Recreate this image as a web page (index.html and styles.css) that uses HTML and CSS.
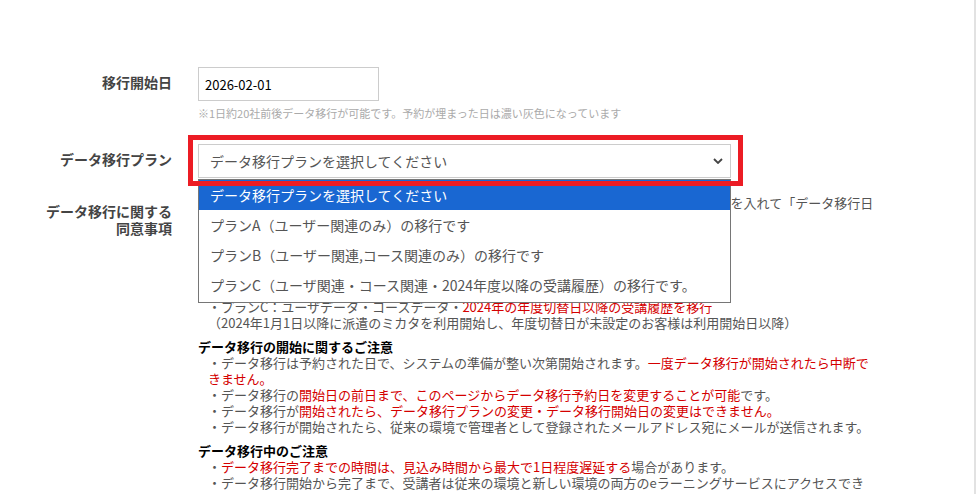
FILE: index.html
```html
<!DOCTYPE html>
<html lang="ja">
<head>
    <meta charset="UTF-8">
    <meta name="viewport" content="width=device-width, initial-scale=1.0">
    <title>データ移行予約</title>
    <link rel="stylesheet" href="styles.css">
</head>
<body>
    <div class="page">
        <form class="migration-form">
            <div class="form-row">
                <label class="form-label">移行開始日</label>
                <div class="form-field">
                    <input class="date-input" type="text" value="2026-02-01">
                    <p class="hint">※1日約20社前後データ移行が可能です。予約が埋まった日は濃い灰色になっています</p>
                </div>
            </div>

            <div class="form-row row-plan">
                <label class="form-label">データ移行プラン</label>
                <div class="form-field plan-field">
                    <div class="select-box">
                        <span>データ移行プランを選択してください</span>
                        <svg class="chevron" width="10" height="6" viewBox="0 0 10 6">
                            <path d="M1 1 L5 5 L9 1" fill="none" stroke="#444" stroke-width="1.8"/>
                        </svg>
                    </div>
                    <!-- open list of the select -->
                    <ul class="dropdown">
                        <li class="active">データ移行プランを選択してください</li>
                        <li>プランA（ユーザー関連のみ）の移行です</li>
                        <li>プランB（ユーザー関連,コース関連のみ）の移行です</li>
                        <li>プランC（ユーザ関連・コース関連・2024年度以降の受講履歴）の移行です。</li>
                    </ul>
                    <div class="highlight"></div>
                </div>
            </div>

            <div class="form-row row-agree">
                <label class="form-label">データ移行に関する<br>同意事項</label>
                <div class="form-field agreement">
                    <p>以下の注意事項をご確認のうえ、同意いただける場合は下記のチェックボックスにチェックを入れて「データ移行日を予約する」ボタンを押してください。</p>

                    <p>
                        <strong>データ移行プランについて</strong>
                        <span class="indent">
                            ・プランA：ユーザデータのみ移行<br>
                            ・プランB：ユーザデータ・コースデータを移行<br>
                            （コースに紐づく受講状況・受講履歴は移行されません）<br>
                            ・プランC：ユーザデータ・コースデータ・<em>2024年の年度切替日以降の受講履歴を移行</em><br>
                            （2024年1月1日以降に派遣のミカタを利用開始し、年度切替日が未設定のお客様は利用開始日以降）
                        </span>
                    </p>

                    <p>
                        <strong>データ移行の開始に関するご注意</strong>
                        <span class="indent">
                            ・データ移行は予約された日で、システムの準備が整い次第開始されます。<em>一度データ移行が開始されたら中断できません。</em><br>
                            ・データ移行の<em>開始日の前日まで、このページからデータ移行予約日を変更することが可能</em>です。<br>
                            ・データ移行が<em>開始されたら、データ移行プランの変更・データ移行開始日の変更はできません。</em><br>
                            ・データ移行が開始されたら、従来の環境で管理者として登録されたメールアドレス宛にメールが送信されます。
                        </span>
                    </p>

                    <p>
                        <strong>データ移行中のご注意</strong>
                        <span class="indent">
                            ・<em>データ移行完了までの時間は、見込み時間から最大で1日程度遅延する</em>場合があります。<br>
                            ・データ移行開始から完了まで、受講者は従来の環境と新しい環境の両方のeラーニングサービスにアクセスできます。<br>
                            ・データ移行中に従来の環境で登録・変更されたデータは、新しい環境に反映されない場合があります。
                        </span>
                    </p>
                </div>
            </div>
        </form>
    </div>
</body>
</html>
```

FILE: styles.css
```css
* {
    box-sizing: border-box;
}

body {
    margin: 0;
    font-family: "Noto Sans CJK JP", "Noto Sans", sans-serif;
    background: #fff;
    color: #555;
}

.page {
    width: 976px;
    min-height: 494px;
    border-right: 2px solid #e2e2e2;
    padding-top: 67px;
}

.form-row {
    display: grid;
    grid-template-columns: 172px 676px;
    column-gap: 26px;
    align-items: start;
}

.form-label {
    text-align: right;
    font-size: 14px;
    line-height: 17px;
    font-weight: bold;
    color: #444;
    padding-top: 7px;
}

.date-input {
    display: block;
    width: 181px;
    height: 34px;
    border: 1px solid #ccc;
    padding: 0 6px;
    font-family: inherit;
    font-size: 13px;
    color: #000;
    outline: none;
}

.hint {
    margin: 4px 0 0;
    font-size: 11px;
    line-height: 16px;
    color: #aaa;
}

.row-plan {
    margin-top: 23px;
}

.plan-field {
    position: relative;
}

.select-box {
    width: 533px;
    height: 34px;
    border: 1px solid #ccc;
    padding: 0 7px 0 11px;
    display: flex;
    align-items: center;
    justify-content: space-between;
    font-size: 14px;
    color: #555;
}

.chevron {
    display: block;
}

.dropdown {
    position: absolute;
    left: 0;
    top: 35px;
    width: 533px;
    margin: 0;
    padding: 0 0 2px;
    list-style: none;
    background: #fff;
    border: 1px solid #767676;
    z-index: 2;
}

.dropdown li {
    height: 30px;
    line-height: 30px;
    padding-left: 11px;
    font-size: 14px;
    color: #555;
    white-space: nowrap;
}

.dropdown li.active {
    background: #1967d2;
    color: #fff;
}

.highlight {
    position: absolute;
    left: -10px;
    top: -9px;
    width: 555px;
    height: 51px;
    border: 5px solid #ec1c24;
    z-index: 3;
}

.row-agree {
    margin-top: 17px;
}

.row-agree .form-label {
    padding-top: 8px;
}

.agreement {
    font-size: 13px;
    line-height: 16px;
    color: #555;
}

.agreement p {
    margin: 0 0 8px;
}

.agreement strong {
    display: block;
    color: #000;
}

.agreement em {
    font-style: normal;
    color: #d40000;
}

.indent {
    display: block;
    padding-left: 10px;
}
```
